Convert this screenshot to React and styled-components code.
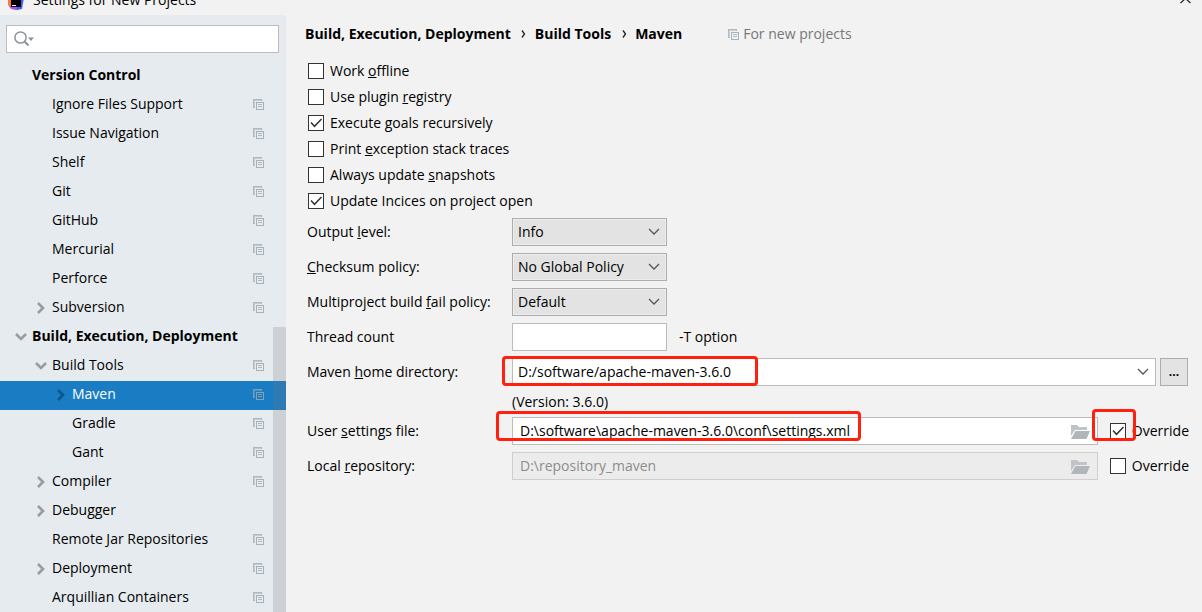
import React, { useState } from 'react'
import styled, { createGlobalStyle } from 'styled-components'

const GlobalStyle = createGlobalStyle`
    * {
        box-sizing: border-box;
    }

    body {
        margin: 0;
        background: #f2f2f2;
    }

    body, input, select, button {
        font-family: 'Open Sans', 'Noto Sans', sans-serif;
        font-size: 14px;
        line-height: 20px;
        color: #000;
    }
`

const StyledWindow = styled.div`
    display: flex;
    flex-direction: column;
    height: 100vh;
    overflow: hidden;
`

const StyledTitleBar = styled.header`
    display: flex;
    align-items: flex-end;
    gap: 9px;
    height: 15px;
    flex: none;
    padding: 0 11px 5px 8px;
`

const StyledTitle = styled.span`
    flex: 1;
`

const StyledCloseButton = styled.button`
    display: flex;
    align-items: center;
    height: 22px;
    padding: 0;
    border: 0;
    background: none;
`

const StyledBody = styled.div`
    display: flex;
    flex: 1;
    min-height: 0;
`

/*----------
    sidebar
----------*/

const StyledSidebar = styled.aside`
    position: relative;
    flex: none;
    width: 286px;
    overflow: hidden;
    background: #e6ebef;
`

const StyledSearch = styled.label`
    display: flex;
    align-items: center;
    height: 28px;
    margin: 10px 7px 9px 6px;
    padding-left: 7px;
    border: 1px solid #bcbcbc;
    background: #fff;
`

const StyledSearchInput = styled.input`
    flex: 1;
    min-width: 0;
    border: 0;
    outline: none;
    background: none;
`

const StyledTree = styled.ul`
    margin: 0;
    padding: 0;
    list-style: none;
`

const StyledTreeRow = styled.li`
    display: flex;
    align-items: center;
    height: 29px;
    padding-bottom: 2px;
    padding-left: ${({ $level }) => 10 + $level * 20}px;
    padding-right: 22px;
    font-weight: ${({ $level }) => ($level === 0 ? 700 : 400)};
    color: ${({ $selected }) => ($selected ? '#fff' : '#000')};
    background: ${({ $selected }) => ($selected ? '#1a7dc4' : 'none')};
`

const StyledArrow = styled.span`
    display: flex;
    justify-content: center;
    width: 22px;
    color: ${({ $selected }) => ($selected ? '#0f5587' : '#999c9f')};
`

const StyledTreeLabel = styled.span`
    flex: 1;
    padding-bottom: 2px;
    white-space: nowrap;
`

const StyledScrollThumb = styled.div`
    position: absolute;
    top: 312px;
    right: 0;
    bottom: 0;
    width: 13px;
    background: rgba(120, 115, 125, 0.22);
`

/*----------
    settings page
----------*/

const StyledMain = styled.main`
    flex: 1;
    min-width: 0;
    padding: 9px 14px 0 19px;
`

const StyledBreadcrumbs = styled.nav`
    display: flex;
    align-items: center;
    margin-bottom: 14px;
    font-weight: 700;
    white-space: nowrap;
`

const StyledSeparator = styled.span`
    display: flex;
    justify-content: center;
    width: 24px;
    padding-left: 2px;
`

const StyledScope = styled.span`
    display: flex;
    align-items: center;
    gap: 4px;
    margin-left: 46px;
    font-weight: 400;
    color: #777;
`

const StyledChecks = styled.div`
    display: flex;
    flex-direction: column;
    padding-left: 3px;
    margin-bottom: 4px;
`

const StyledCheckLabel = styled.label`
    display: flex;
    align-items: center;
    gap: 6px;
    height: 26px;
    white-space: nowrap;
`

const StyledCheckMark = styled.span`
    position: relative;
    display: flex;
    width: 16px;
    height: 16px;

    svg {
        position: absolute;
        top: 0;
        left: 0;
        visibility: hidden;
        pointer-events: none;
    }

    input:checked + svg {
        visibility: visible;
    }
`

const StyledCheckInput = styled.input`
    appearance: none;
    width: 16px;
    height: 16px;
    margin: 0;
    border: 1px solid #333;
    background: #fff;
`

const StyledForm = styled.form`
    display: grid;
    grid-template-columns: 205px 1fr;
    row-gap: 7px;
    padding-left: 2px;
`

const StyledFormLabel = styled.label`
    height: 28px;
    line-height: 28px;
    white-space: nowrap;
`

const StyledField = styled.div`
    position: relative;
    display: flex;
    align-items: center;
    height: 28px;
`

const StyledSelectBox = styled.div`
    position: relative;
    flex: ${({ $wide }) => ($wide ? '1' : 'none')};
    width: 155px;
    height: 28px;

    svg {
        position: absolute;
        top: 10px;
        right: 7px;
        pointer-events: none;
    }
`

const StyledSelect = styled.select`
    appearance: none;
    width: 100%;
    height: 28px;
    padding: 0 24px 0 5px;
    border: 1px solid ${({ $light }) => ($light ? '#bcbcbc' : '#adadad')};
    border-radius: 0;
    background: ${({ $light }) => ($light ? '#fff' : '#e3e3e3')};
    box-shadow: inset 0 0 0 1px ${({ $light }) => ($light ? '#fff' : '#ededed')};
`

const StyledTextInput = styled.input`
    width: 155px;
    height: 28px;
    padding: 0 7px 2px;
    border: 1px solid #bcbcbc;
`

const StyledPathBox = styled.div`
    position: relative;
    flex: 1;
    margin-right: 12px;

    svg {
        position: absolute;
        top: 8px;
        right: 8px;
    }
`

const StyledPathInput = styled(StyledTextInput)`
    display: block;
    width: 100%;
    padding-right: 32px;

    &:disabled {
        border-color: #cfcfcf;
        color: #8c8c8c;
        background: #ececec;
    }
`

const StyledHint = styled.span`
    margin-left: 12px;
`

const StyledBrowseButton = styled.button`
    width: 28px;
    height: 28px;
    margin-left: 4px;
    padding: 0;
    border: 1px solid #adadad;
    font-size: 12px;
    font-weight: 700;
    background: #e3e3e3;
`

const StyledVersion = styled.div`
    grid-column: 2;
    height: 17px;
    line-height: 17px;
`

const StyledHighlight = styled.div`
    position: absolute;
    top: ${({ $top }) => $top}px;
    left: ${({ $left }) => $left}px;
    width: ${({ $width }) => $width}px;
    height: ${({ $height }) => $height}px;
    border: 3px solid #ff2010;
    border-radius: 4px;
    pointer-events: none;
`

const StyledOverride = styled.div`
    position: relative;
    margin-right: -1px;
`

/*----------
    icons
----------*/

const LogoIcon = () => (
    <svg width="16" height="16" viewBox="0 0 16 16">
        <path d="M0 2h8v12H3L0 11z" fill="#f97a3a" />
        <path d="M8 1l8 3-2 11-5 1-6-2z" fill="#4a5cf0" />
        <path d="M1 12l8 1-1 3-5-1z" fill="#c04be0" />
        <path d="M3 3h10v10H3z" fill="#000" />
        <path d="M4 11h4v1H4z" fill="#fff" />
    </svg>
)

const CloseIcon = () => (
    <svg width="11" height="11" viewBox="0 0 11 11">
        <path d="M.5 0l10 9M10.500 0l-10 9" stroke="#222" strokeWidth="1.2" />
    </svg>
)

const SearchIcon = () => (
    <svg width="20" height="16" viewBox="0 0 20 16">
        <circle cx="6.5" cy="6.5" r="5.6" fill="none" stroke="#8b939a" strokeWidth="1.5" />
        <path d="M10.5 10.5l4 4" stroke="#8b939a" strokeWidth="2" />
        <path d="M14 6.5h6l-3 3.5z" fill="#8b939a" />
    </svg>
)

const CopyIcon = () => (
    <svg width="11" height="11" viewBox="0 0 11 11" shapeRendering="crispEdges">
        <path d="M0 0h9v2H8V1H1v7h1v1H0z" fill="#9aa7b0" opacity="0.75" />
        <path d="M1 1h7v1H2v6H1z" fill="#9aa7b0" opacity="0.45" />
        <path d="M3 3h8v8H3zM4 4v6h6V4z" fill="#9aa7b0" fillRule="evenodd" opacity="0.85" />
        <path d="M5 5h4v1H5zM5 7h4v1H5z" fill="#9aa7b0" opacity="0.75" />
    </svg>
)

const TreeArrowIcon = ({ open }) =>
    open ? (
        <svg width="12" height="8" viewBox="0 0 12 8">
            <path d="M1 1l5 5 5-5" fill="none" stroke="currentColor" strokeWidth="2.6" />
        </svg>
    ) : (
        <svg width="8" height="12" viewBox="0 0 8 12">
            <path d="M1 1l5 5-5 5" fill="none" stroke="currentColor" strokeWidth="2.6" />
        </svg>
    )

const CrumbIcon = () => (
    <svg width="5" height="8" viewBox="0 0 5 8">
        <path d="M1 .5L3.5 4 1 7.5" fill="none" stroke="#222" strokeWidth="1.3" />
    </svg>
)

const ChevronIcon = () => (
    <svg width="12" height="8" viewBox="0 0 12 8">
        <path d="M1 1l5 5 5-5" fill="none" stroke="#555" strokeWidth="1.3" />
    </svg>
)

const CheckIcon = () => (
    <svg width="16" height="16" viewBox="0 0 16 16">
        <path d="M3 7.500l3.500 3.800L13.500 4" fill="none" stroke="#333" strokeWidth="1.5" />
    </svg>
)

const FolderIcon = () => (
    <svg width="19" height="14" viewBox="0 0 19 14">
        <path d="M0 0h6l2 2h8v3H4L0 11z" fill="#c0c4c8" />
        <path d="M4.500 6H19l-3.500 8H0z" fill="#b1b6bb" />
    </svg>
)

/*----------
    data
----------*/

const treeItems = [
    { label: 'Version Control', level: 0 },
    { label: 'Ignore Files Support', level: 1, copy: true },
    { label: 'Issue Navigation', level: 1, copy: true },
    { label: 'Shelf', level: 1, copy: true },
    { label: 'Git', level: 1, copy: true },
    { label: 'GitHub', level: 1, copy: true },
    { label: 'Mercurial', level: 1, copy: true },
    { label: 'Perforce', level: 1, copy: true },
    { label: 'Subversion', level: 1, copy: true, arrow: 'closed' },
    { label: 'Build, Execution, Deployment', level: 0, arrow: 'open' },
    { label: 'Build Tools', level: 1, copy: true, arrow: 'open' },
    { label: 'Maven', level: 2, copy: true, arrow: 'closed', selected: true },
    { label: 'Gradle', level: 2, copy: true },
    { label: 'Gant', level: 2, copy: true },
    { label: 'Compiler', level: 1, copy: true, arrow: 'closed' },
    { label: 'Debugger', level: 1, arrow: 'closed' },
    { label: 'Remote Jar Repositories', level: 1, copy: true },
    { label: 'Deployment', level: 1, copy: true, arrow: 'closed' },
    { label: 'Arquillian Containers', level: 1, copy: true },
]

const options = [
    { id: 'offline', label: <>Work <u>o</u>ffline</> },
    { id: 'registry', label: <>Use plugin <u>r</u>egistry</> },
    { id: 'recursive', label: <>Execute <u>g</u>oals recursively</>, checked: true },
    { id: 'traces', label: <>Print <u>e</u>xception stack traces</> },
    { id: 'snapshots', label: <>Always update <u>s</u>napshots</> },
    { id: 'indices', label: 'Update Incices on project open', checked: true },
]

const CheckBox = ({ defaultChecked, children }) => (
    <StyledCheckLabel>
        <StyledCheckMark>
            <StyledCheckInput type="checkbox" defaultChecked={defaultChecked} />
            <CheckIcon />
        </StyledCheckMark>
        <span>{children}</span>
    </StyledCheckLabel>
)

const ComboBox = ({ id, values, wide }) => (
    <StyledSelectBox $wide={wide}>
        <StyledSelect id={id} $light={wide}>
            {values.map((value) => (
                <option key={value}>{value}</option>
            ))}
        </StyledSelect>
        <ChevronIcon />
    </StyledSelectBox>
)

const Sidebar = () => {
    const [query, setQuery] = useState('')
    const onQueryChange = (event) => setQuery(event.target.value)

    return (
        <StyledSidebar>
            <StyledSearch>
                <SearchIcon />
                <StyledSearchInput
                    type="text"
                    aria-label="Search settings"
                    value={query}
                    onChange={onQueryChange}
                />
            </StyledSearch>
            <StyledTree>
                {treeItems.map(({ label, level, copy, arrow, selected }) => (
                    <StyledTreeRow key={label} $level={level} $selected={selected}>
                        <StyledArrow $selected={selected}>
                            {arrow ? <TreeArrowIcon open={arrow === 'open'} /> : null}
                        </StyledArrow>
                        <StyledTreeLabel>{label}</StyledTreeLabel>
                        {copy ? <CopyIcon /> : null}
                    </StyledTreeRow>
                ))}
            </StyledTree>
            <StyledScrollThumb />
        </StyledSidebar>
    )
}

const App = () => {
    const [settingsFile, setSettingsFile] = useState(
        'D:\\software\\apache-maven-3.6.0\\conf\\settings.xml'
    )
    const onSettingsFileChange = (event) => setSettingsFile(event.target.value)

    return (
        <StyledWindow>
            <GlobalStyle />
            <StyledTitleBar>
                <LogoIcon />
                <StyledTitle>Settings for New Projects</StyledTitle>
                <StyledCloseButton type="button" aria-label="Close">
                    <CloseIcon />
                </StyledCloseButton>
            </StyledTitleBar>
            <StyledBody>
                <Sidebar />
                <StyledMain>
                    <StyledBreadcrumbs>
                        <span>Build, Execution, Deployment</span>
                        <StyledSeparator>
                            <CrumbIcon />
                        </StyledSeparator>
                        <span>Build Tools</span>
                        <StyledSeparator>
                            <CrumbIcon />
                        </StyledSeparator>
                        <span>Maven</span>
                        <StyledScope>
                            <CopyIcon />
                            For new projects
                        </StyledScope>
                    </StyledBreadcrumbs>
                    <StyledChecks>
                        {options.map(({ id, label, checked }) => (
                            <CheckBox key={id} defaultChecked={checked}>
                                {label}
                            </CheckBox>
                        ))}
                    </StyledChecks>
                    <StyledForm>
                        <StyledFormLabel htmlFor="level">
                            Output <u>l</u>evel:
                        </StyledFormLabel>
                        <ComboBox id="level" values={['Info']} />
                        <StyledFormLabel htmlFor="checksum">
                            <u>C</u>hecksum policy:
                        </StyledFormLabel>
                        <ComboBox id="checksum" values={['No Global Policy']} />
                        <StyledFormLabel htmlFor="fail">
                            Multiproject build <u>f</u>ail policy:
                        </StyledFormLabel>
                        <ComboBox id="fail" values={['Default']} />
                        <StyledFormLabel htmlFor="threads">Thread count</StyledFormLabel>
                        <StyledField>
                            <StyledTextInput id="threads" type="text" />
                            <StyledHint>-T option</StyledHint>
                        </StyledField>
                        <StyledFormLabel htmlFor="home">
                            Maven <u>h</u>ome directory:
                        </StyledFormLabel>
                        <StyledField>
                            <ComboBox
                                id="home"
                                values={['D:/software/apache-maven-3.6.0']}
                                wide
                            />
                            <StyledBrowseButton type="button">...</StyledBrowseButton>
                            <StyledHighlight $top={-2} $left={-10} $width={256} $height={30} />
                        </StyledField>
                        <StyledVersion>(Version: 3.6.0)</StyledVersion>
                        <StyledFormLabel htmlFor="settings">
                            User <u>s</u>ettings file:
                        </StyledFormLabel>
                        <StyledField>
                            <StyledPathBox>
                                <StyledPathInput
                                    id="settings"
                                    type="text"
                                    value={settingsFile}
                                    onChange={onSettingsFileChange}
                                />
                                <FolderIcon />
                            </StyledPathBox>
                            <StyledOverride>
                                <CheckBox defaultChecked>Override</CheckBox>
                                <StyledHighlight $top={-9} $left={-18} $width={44} $height={32} />
                            </StyledOverride>
                            <StyledHighlight $top={-6} $left={-16} $width={365} $height={30} />
                        </StyledField>
                        <StyledFormLabel htmlFor="repository">
                            Local <u>r</u>epository:
                        </StyledFormLabel>
                        <StyledField>
                            <StyledPathBox>
                                <StyledPathInput
                                    id="repository"
                                    type="text"
                                    defaultValue="D:\repository_maven"
                                    disabled
                                />
                                <FolderIcon />
                            </StyledPathBox>
                            <StyledOverride>
                                <CheckBox>Override</CheckBox>
                            </StyledOverride>
                        </StyledField>
                    </StyledForm>
                </StyledMain>
            </StyledBody>
        </StyledWindow>
    )
}

export default App
